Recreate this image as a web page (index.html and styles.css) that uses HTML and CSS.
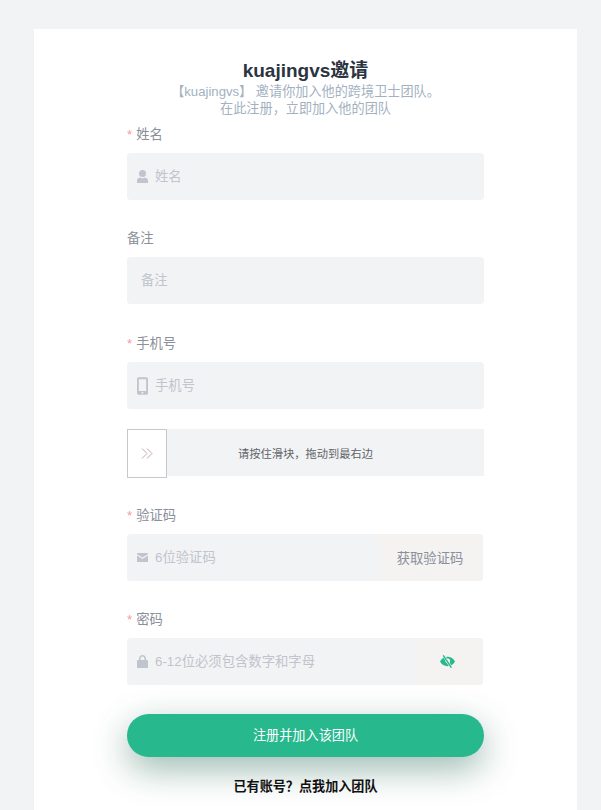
FILE: index.html
```html
<!DOCTYPE html>
<html lang="zh-CN">

<head>
    <meta charset="UTF-8">
    <meta name="viewport" content="width=device-width, initial-scale=1.0">
    <title>kuajingvs邀请</title>
    <link rel="stylesheet" href="styles.css">
</head>

<body>
    <div class="card">
        <div class="form">
            <h1 class="title">kuajingvs邀请</h1>
            <p class="sub">【kuajingvs】 邀请你加入他的跨境卫士团队。<br>在此注册，立即加入他的团队</p>

            <!-- 姓名 -->
            <div class="item item-first">
                <label class="label"><span class="star">*</span>姓名</label>
                <div class="input">
                    <svg class="icon icon-user" viewBox="0 0 11 13"><circle cx="5.5" cy="3.6" r="3.5"/><path d="M0 13V10.6C0 9 1.4 7.9 3 7.5 3.7 8 4.6 8.3 5.5 8.3S7.3 8 8 7.5C9.6 7.9 11 9 11 10.6V13Z"/></svg>
                    <span class="holder">姓名</span>
                </div>
            </div>

            <!-- 备注 -->
            <div class="item">
                <label class="label">备注</label>
                <div class="input input-plain">
                    <span class="holder">备注</span>
                </div>
            </div>

            <!-- 手机号 -->
            <div class="item item-phone">
                <label class="label"><span class="star">*</span>手机号</label>
                <div class="input">
                    <svg class="icon icon-phone" viewBox="0 0 12 19"><path fill-rule="evenodd" d="M2 0H10C11.1 0 12 .9 12 2V17C12 18.1 11.1 19 10 19H2C.9 19 0 18.1 0 17V2C0 .9.9 0 2 0ZM2 2.2V15H10V2.2ZM6 15.9A1 1 0 1 0 6 17.9 1 1 0 1 0 6 15.9Z"/></svg>
                    <span class="holder">手机号</span>
                </div>
            </div>

            <!-- 滑块 -->
            <div class="slider">
                <div class="slider-btn">
                    <svg width="12" height="11" viewBox="0 0 12 11" fill="none" stroke-width="1"><path d="M1 .5 6 5.5 1 10.5" stroke="#c9a9a6"/><path d="M6 .5 11 5.5 6 10.5" stroke="#b9a9b6"/></svg>
                </div>
                <span class="slider-text">请按住滑块，拖动到最右边</span>
            </div>

            <!-- 验证码 -->
            <div class="item item-code">
                <label class="label"><span class="star">*</span>验证码</label>
                <div class="input input-short">
                    <svg class="icon icon-mail" viewBox="0 0 11 9"><path d="M0 .6C0 .3.3 0 .6 0H10.4C10.7 0 11 .3 11 .6V1.3L5.5 4.6 0 1.3ZM0 2.6 5.5 5.9 11 2.6V8.4C11 8.7 10.7 9 10.4 9H.6C.3 9 0 8.7 0 8.4Z"/></svg>
                    <span class="holder">6位验证码</span>
                    <span class="addon addon-code">获取验证码</span>
                </div>
            </div>

            <!-- 密码 -->
            <div class="item">
                <label class="label"><span class="star">*</span>密码</label>
                <div class="input input-short">
                    <svg class="icon icon-lock" viewBox="0 0 11 13"><path fill-rule="evenodd" d="M2 5V3.5C2 1.6 3.6 0 5.5 0S9 1.6 9 3.5V5H10C10.6 5 11 5.4 11 6V12C11 12.6 10.6 13 10 13H1C.4 13 0 12.6 0 12V6C0 5.4.4 5 1 5ZM3.6 5H7.4V3.5C7.4 2.4 6.6 1.6 5.5 1.6S3.6 2.4 3.6 3.5Z"/></svg>
                    <span class="holder">6-12位必须包含数字和字母</span>
                    <span class="addon addon-eye">
                        <svg width="15" height="13" viewBox="0 0 15 13"><path d="M0 6.5C1.6 3.6 4.2 1.8 7.5 1.8S13.4 3.6 15 6.5C13.4 9.4 10.8 11.2 7.5 11.2S1.6 9.4 0 6.5Z" fill="#27b88d"/><circle cx="7.8" cy="6" r="2.4" fill="#f4f3f2"/><path d="M3.4 .4 11.2 12.4" stroke="#f4f3f2" stroke-width="2.6"/><path d="M3.2 .3 11.4 12.7" stroke="#27b88d" stroke-width="1.4"/></svg>
                    </span>
                </div>
            </div>

            <button class="submit">注册并加入该团队</button>
            <a class="login">已有账号？点我加入团队</a>
        </div>
    </div>
</body>

</html>
```

FILE: styles.css
```css
* {
    margin: 0;
    padding: 0;
    box-sizing: border-box;
}

html,
body {
    height: 810px;
    overflow: hidden;
}

body {
    background-color: #f2f3f5;
    font-family: "Liberation Sans", "Noto Sans CJK SC", sans-serif;
    padding: 29px 24px 0 34px;
}

.card {
    background-color: #ffffff;
    height: 781px;
    padding-top: 30px;
}

.form {
    width: 357px;
    margin-left: 93px;
}

.title {
    font-size: 19px;
    line-height: 23px;
    font-weight: bold;
    color: #2b3440;
    text-align: center;
}

.sub {
    margin-top: 1px;
    font-size: 13.15px;
    line-height: 17px;
    color: #a3b1bf;
    text-align: center;
}

/* 表单项 */
.item {
    margin-top: 28px;
}

.item-first {
    margin-top: 0;
    padding-top: 7px;
}

.item-phone {
    padding-top: 1px;
}

.item-code {
    margin-top: 29px;
}

.label {
    display: block;
    font-size: 13.33px;
    line-height: 22px;
    margin-bottom: 7px;
    color: #8a8f99;
}

.star {
    color: #f59a9a;
    margin-right: 4px;
}

.input {
    display: flex;
    align-items: center;
    height: 47px;
    padding-left: 10px;
    background-color: #f2f3f5;
    border-radius: 4px;
    overflow: hidden;
}

.input-plain {
    padding-left: 14px;
}

.input-short {
    width: 356px;
}

.icon {
    width: 11px;
    margin-right: 7px;
    flex: none;
    fill: #c0c4cc;
}

.icon-user {
    height: 13px;
}

.icon-phone {
    height: 18px;
}

.icon-mail {
    height: 9px;
}

.icon-lock {
    height: 13px;
}

.holder {
    font-size: 13.33px;
    padding-bottom: 2px;
    color: #c0c4cc;
}

.addon {
    margin-left: auto;
    height: 100%;
    display: flex;
    align-items: center;
    justify-content: center;
    background-color: #f4f3f2;
}

.addon-code {
    width: 103px;
    padding-right: 3px;
    font-size: 13.33px;
    color: #8a8f99;
}

.addon-eye {
    width: 68px;
    padding-right: 3px;
}

/* 滑块 */
.slider {
    position: relative;
    display: flex;
    align-items: center;
    justify-content: center;
    height: 47px;
    margin-top: 20px;
    background-color: #f2f3f5;
}

.slider-btn {
    position: absolute;
    left: 0;
    top: 0;
    width: 40px;
    height: 49px;
    display: flex;
    align-items: center;
    justify-content: center;
    background-color: #ffffff;
    border: 1px solid #c8c8c8;
}

.slider-text {
    font-size: 11.25px;
    color: #5f6368;
}

/* 按钮 */
.submit {
    display: block;
    width: 357px;
    height: 43px;
    margin-top: 29px;
    padding-bottom: 2px;
    background-color: #27b88d;
    color: #ffffff;
    border: none;
    border-radius: 22px;
    font-family: inherit;
    font-size: 13.15px;
    box-shadow: 0 12px 35px rgba(20, 90, 70, 0.42);
}

.login {
    display: block;
    margin-top: 21px;
    font-size: 13.1px;
    line-height: 18px;
    font-weight: bold;
    color: #111111;
    text-align: center;
}
```
